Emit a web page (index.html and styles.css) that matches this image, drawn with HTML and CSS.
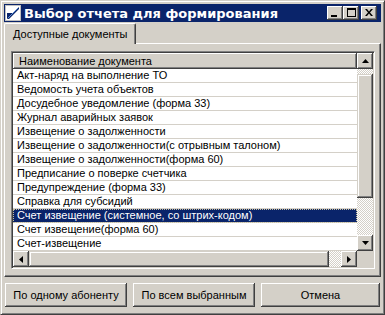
FILE: index.html
```html
<!DOCTYPE html>
<html lang="ru">
  <head>
    <meta charset="UTF-8" />
    <meta name="viewport" content="width=device-width, initial-scale=1.0" />
    <title>Выбор отчета для формирования</title>
    <link rel="stylesheet" href="styles.css">
  </head>
  <body>
    <div class="window">
      <!-- Title bar -->
      <div class="titlebar">
        <svg class="app-icon" width="16" height="16" viewBox="0 0 16 16">
          <rect x="0.5" y="0.5" width="15" height="15" fill="#fff" stroke="#c0c0c0" />
          <polygon points="2,14 14,2 14,4 4,14" fill="#0a246a" />
          <polygon points="2,14 2,8 8,8" fill="#0a246a" />
          <line x1="3" y1="13" x2="13" y2="3" stroke="#5a8ad0" stroke-width="1" />
        </svg>
        <span class="title">Выбор отчета для формирования</span>
        <div class="caption-btns">
          <div class="cap-btn">
            <svg width="8" height="8" viewBox="0 0 8 8"><rect x="0" y="6" width="6" height="2" fill="#000" /></svg>
          </div>
          <div class="cap-btn">
            <svg width="9" height="9" viewBox="0 0 9 9"><rect x="0.5" y="0.5" width="8" height="8" fill="none" stroke="#000" /><rect x="0" y="0" width="9" height="2" fill="#000" /></svg>
          </div>
          <div class="cap-btn close">
            <svg width="8" height="7" viewBox="0 0 8 7"><path d="M0 0h2l2 2.5L6 0h2L5 3.5 8 7H6L4 4.5 2 7H0l3-3.5z" fill="#000" /></svg>
          </div>
        </div>
      </div>

      <!-- Tabs -->
      <div class="tabs">
        <div class="tab">Доступные документы</div>
      </div>
      <div class="panel">
        <div class="listview">
          <div class="lv-body">
            <div class="lv-cols">
              <div class="lv-header">Наименование документа</div>
              <div class="row">Акт-наряд на выполнение ТО</div>
              <div class="row">Ведомость учета объектов</div>
              <div class="row">Досудебное уведомление (форма 33)</div>
              <div class="row">Журнал аварийных заявок</div>
              <div class="row">Извещение о задолженности</div>
              <div class="row">Извещение о задолженности(с отрывным талоном)</div>
              <div class="row">Извещение о задолженности(форма 60)</div>
              <div class="row">Предписание о поверке счетчика</div>
              <div class="row">Предупреждение (форма 33)</div>
              <div class="row">Справка для субсидий</div>
              <div class="row selected">Счет извещение (системное, со штрих-кодом)</div>
              <div class="row">Счет извещение(форма 60)</div>
              <div class="row">Счет-извещение</div>
            </div>
            <!-- Vertical scrollbar -->
            <div class="vscroll">
              <div class="sb-btn">
                <svg width="7" height="4" viewBox="0 0 7 4"><polygon points="3.5,0 7,4 0,4" fill="#000" /></svg>
              </div>
              <div class="sb-track v-top"></div>
              <div class="sb-thumb v-thumb"></div>
              <div class="sb-track v-rest"></div>
              <div class="sb-btn">
                <svg width="7" height="4" viewBox="0 0 7 4"><polygon points="0,0 7,0 3.5,4" fill="#000" /></svg>
              </div>
            </div>
          </div>
          <!-- Horizontal scrollbar -->
          <div class="hscroll-row">
            <div class="hscroll">
              <div class="sb-btn">
                <svg width="4" height="7" viewBox="0 0 4 7"><polygon points="4,0 4,7 0,3.5" fill="#000" /></svg>
              </div>
              <div class="sb-thumb h-thumb"></div>
              <div class="sb-track h-rest"></div>
              <div class="sb-btn">
                <svg width="4" height="7" viewBox="0 0 4 7"><polygon points="0,0 4,3.5 0,7" fill="#000" /></svg>
              </div>
            </div>
            <div class="corner"></div>
          </div>
        </div>
      </div>

      <!-- Bottom buttons -->
      <div class="buttons">
        <button class="btn">По одному абоненту</button>
        <button class="btn">По всем выбранным</button>
        <button class="btn">Отмена</button>
      </div>
    </div>
  </body>
</html>
```

FILE: styles.css
```css
* {
  box-sizing: border-box;
}
body {
  margin: 0;
  font-family: "Liberation Sans", Arial, sans-serif;
  font-size: 11px;
  color: #000;
  background-color: #d4d0c8;
}

/* Window frame */
.window {
  width: 385px;
  height: 315px;
  padding: 3px;
  background-color: #d4d0c8;
  border: 1px solid;
  border-color: #d4d0c8 #404040 #404040 #d4d0c8;
  box-shadow: inset 1px 1px #fff, inset -1px -1px #808080;
  display: flex;
  flex-direction: column;
}

/* Title bar */
.titlebar {
  height: 18px;
  flex: none;
  background-color: #0a246a;
  display: flex;
  align-items: center;
  padding-left: 1px;
  padding-right: 4px;
}
.app-icon {
  flex: none;
}
.title {
  margin-left: 3px;
  color: #fff;
  font-family: "DejaVu Sans", sans-serif;
  font-weight: bold;
  font-size: 13px;
  flex: 1;
  white-space: nowrap;
}
.caption-btns {
  display: flex;
}
.cap-btn {
  width: 16px;
  height: 14px;
  background-color: #d4d0c8;
  box-shadow: inset -1px -1px #404040, inset 1px 1px #fff, inset -2px -2px #808080;
  display: flex;
  align-items: center;
  justify-content: center;
  padding-bottom: 1px;
}
.cap-btn.close {
  margin-left: 2px;
}

/* Tabs */
.tabs {
  display: flex;
  flex: none;
  margin-top: 1px;
  height: 20px;
  align-items: flex-end;
}
.tab {
  height: 21px;
  width: 132px;
  padding: 4px 0 0 8px;
  border-top: 1px solid #fff;
  border-left: 1px solid #fff;
  border-right: 1px solid #404040;
  box-shadow: inset -1px 0 #808080;
  border-radius: 2px 2px 0 0;
  white-space: nowrap;
  position: relative;
  z-index: 1;
  margin-bottom: -1px;
  background-color: #d4d0c8;
}
.panel {
  height: 234px;
  flex: none;
  border-top: 1px solid #fff;
  border-left: 1px solid #fff;
  border-right: 1px solid #404040;
  border-bottom: 1px solid #404040;
  box-shadow: inset -1px -1px #808080;
  padding: 7px 4px 0 6px;
}

/* List view */
.listview {
  width: 364px;
  height: 218px;
  border: 1px solid;
  border-color: #808080 #fff #fff #808080;
  box-shadow: inset 1px 1px #404040, inset -1px -1px #d4d0c8;
  padding: 1px;
  background-color: #fff;
  display: flex;
  flex-direction: column;
}
.lv-body {
  display: flex;
  height: 198px;
  flex: none;
}
.lv-cols {
  flex: 1;
  overflow: hidden;
}
.lv-header {
  height: 16px;
  line-height: 14px;
  background-color: #d4d0c8;
  box-shadow: inset -1px -1px #404040, inset 1px 1px #fff, inset -2px -2px #808080;
  padding: 1px 0 0 6px;
  white-space: nowrap;
}
.row {
  height: 14px;
  line-height: 13px;
  border-bottom: 1px solid #d4d0c8;
  padding-left: 4px;
  white-space: nowrap;
}
.row.selected {
  background-color: #0a246a;
  color: #fff;
  outline: 1px dotted #c8c0a0;
  outline-offset: -1px;
}

/* Scrollbars */
.vscroll {
  width: 16px;
  display: flex;
  flex-direction: column;
}
.sb-btn {
  width: 16px;
  height: 16px;
  flex: none;
  background-color: #d4d0c8;
  box-shadow: inset -1px -1px #404040, inset 1px 1px #fff, inset -2px -2px #808080;
  display: flex;
  align-items: center;
  justify-content: center;
}
.sb-track {
  background-color: #fff;
  background-image: repeating-conic-gradient(#d4d0c8 0 25%, #fff 0 50%);
  background-size: 2px 2px;
}
.sb-thumb {
  background-color: #d4d0c8;
  box-shadow: inset -1px -1px #404040, inset 1px 1px #d4d0c8, inset -2px -2px #808080, inset 2px 2px #fff;
}
.v-top {
  height: 5px;
  flex: none;
}
.v-thumb {
  height: 124px;
  flex: none;
}
.v-rest {
  flex: 1;
}
.hscroll-row {
  display: flex;
  height: 16px;
  flex: none;
}
.hscroll {
  flex: 1;
  display: flex;
}
.h-thumb {
  width: 300px;
  flex: none;
}
.h-rest {
  flex: 1;
}
.corner {
  width: 16px;
  background-color: #d4d0c8;
}

/* Bottom buttons */
.buttons {
  display: flex;
  gap: 6px;
  margin-top: 6px;
  padding-left: 1px;
}
.btn {
  width: 122px;
  height: 24px;
  font-family: "Liberation Sans", Arial, sans-serif;
  font-size: 11px;
  color: #000;
  background-color: #d4d0c8;
  border: none;
  padding: 0;
  box-shadow: inset -1px -1px #404040, inset 1px 1px #fff, inset -2px -2px #808080;
}
.btn:last-child {
  width: 119px;
}
```
